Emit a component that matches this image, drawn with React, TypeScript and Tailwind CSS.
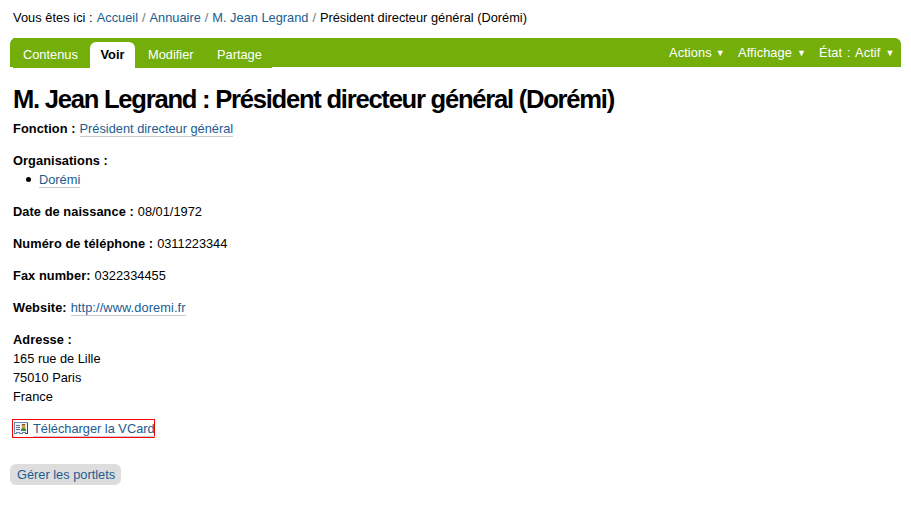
import type { ReactNode } from "react";

const link = "text-[#205c90]";
const underlined = "inline-block h-[18px] border-b border-[#cccccc] leading-[19px] text-[#205c90]";

function Field({ label, children }: { label: string; children?: ReactNode }) {
  return (
    <div className="flex h-[19px] gap-1">
      <b className="tracking-[0.07px]">{label}</b>
      {children}
    </div>
  );
}

function Arrow() {
  return <span className="pt-px text-[9px]">▼</span>;
}

function VCardIcon() {
  return (
    <svg width="14" height="12" viewBox="0 0 14 12" shapeRendering="crispEdges" className="mt-0.5 shrink-0">
      <path d="M0 0H14V12H11V11H9V12H5V11H3V12H0Z" fill="#6f89ae" />
      <path d="M1 1H13V11H12V10H8V11H6V10H2V11H1Z" fill="#edf4fc" />
      <path d="M2 3H6V4H2ZM2 5H6V6H2ZM2 7H6V8H2Z" fill="#60718a" />
      <rect x="7" y="2" width="5" height="7" fill="#d8e8c8" />
      <rect x="8" y="2" width="3" height="4" fill="#c9a047" />
      <rect x="8" y="2" width="3" height="1" fill="#715321" />
      <path d="M8 6H11V7H12V9H7V7H8Z" fill="#4c8b38" />
      <path d="M13 1H14V12H11V11H13Z" fill="#334b70" />
    </svg>
  );
}

export default function App() {
  return (
    <div className="h-[508px] w-[911px] overflow-hidden bg-white font-['Liberation_Sans',Arial,sans-serif] text-[12.8px] leading-[19px] whitespace-nowrap text-black">
      <nav className="flex h-[38px] gap-1 pt-2 pl-[13px]">
        <span className="tracking-[0.05px]">Vous êtes ici :</span>
        <a className={link}>Accueil</a>
        <span className="text-[#76797c]">/</span>
        <a className={link}>Annuaire</a>
        <span className="text-[#76797c]">/</span>
        <a className={link}>M. Jean Legrand</a>
        <span className="text-[#76797c]">/</span>
        <span>Président directeur général (Dorémi)</span>
      </nav>

      <div className="ml-[10px] flex h-[29px] w-[891px] rounded-t-[6px] bg-[#74ae0b] text-white">
        <div className="ml-[3px] flex h-[30px] w-[259px] bg-[#74ae0b] pt-1 leading-[25px]">
          <a className="w-[77px] pl-[10px]">Contenus</a>
          <a className="w-[45px] rounded-t-[6px] bg-white text-center font-bold text-black">Voir</a>
          <a className="w-[69px] pl-[13px]">Modifier</a>
          <a className="pl-[13px]">Partage</a>
        </div>
        <div className="ml-auto flex pt-[5px] pr-[7px]">
          <a className="flex w-[69px] gap-1"><span className="tracking-[0.1px]">Actions</span><Arrow /></a>
          <a className="flex w-[81px] gap-[5px]"><span className="tracking-[0.1px]">Affichage</span><Arrow /></a>
          <a className="flex w-[75px] gap-[5px]"><span className="tracking-[0.1px] [word-spacing:1.3px]">État : Actif</span><Arrow /></a>
        </div>
      </div>

      <main className="pl-[13px]">
        <h1 className="h-[52px] pt-4 text-[25.6px] leading-[32px] font-bold tracking-[-1.25px]">
          M. Jean Legrand : Président directeur général (Dorémi)
        </h1>
        <div className="flex flex-col gap-[13px]">
          <Field label="Fonction :"><a className={underlined}>Président directeur général</a></Field>
          <div>
            <Field label="Organisations :" />
            <ul className="h-[19px] pl-[13px]">
              <li className="flex">
                <span className="mt-[7px] mr-2 size-[5px] rounded-full bg-black" />
                <a className={underlined}>Dorémi</a>
              </li>
            </ul>
          </div>
          <Field label="Date de naissance :">08/01/1972</Field>
          <Field label="Numéro de téléphone :">0311223344</Field>
          <Field label="Fax number:">0322334455</Field>
          <Field label="Website:"><a className={`${underlined} tracking-[0.09px]`}>http://www.doremi.fr</a></Field>
          <div>
            <Field label="Adresse :" />
            <p>165 rue de Lille</p>
            <p>75010 Paris</p>
            <p>France</p>
          </div>
        </div>
        <a className="mt-[13px] -ml-px flex h-[19px] w-[143px] gap-[5px] border border-[#ff0000] pl-px leading-[18px] text-[#205c90]">
          <VCardIcon />
          <span className="h-[17px] border-b border-[#cccccc]">Télécharger la VCard</span>
        </a>
        <a className="mt-[26px] -ml-[3px] block h-[21px] w-[111px] rounded-[6px] bg-[#dddddd] pl-[7px] leading-[21px] text-[#205c90]">
          Gérer les portlets
        </a>
      </main>
    </div>
  );
}
